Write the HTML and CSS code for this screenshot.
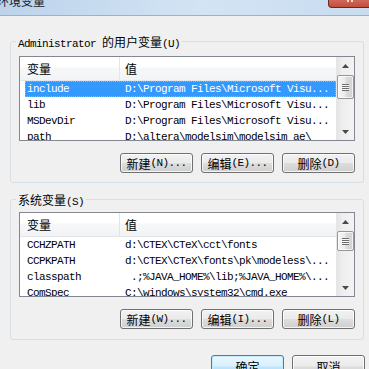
FILE: index.html
```html
<!DOCTYPE html>
<html lang="zh-CN">
<head>
<meta charset="utf-8">
<title>环境变量</title>
<link rel="stylesheet" href="styles.css">
</head>
<body>
<div class="titlebar">
  <span class="title">环境变量</span>
  <span class="close"><span class="leg"></span><span class="leg"></span></span>
</div>

<fieldset class="group group-user">
  <legend><span>Administrator </span><span class="cjk">的用户变量</span><span>(U)</span></legend>
  <div class="list">
    <div class="list-main">
      <div class="header">
        <div class="hcol c1"><span class="cjk">变量</span></div>
        <div class="hcol c2"><span class="cjk">值</span></div>
      </div>
      <div class="row sel"><span class="c1">include</span><span class="c2">D:\Program Files\Microsoft Visu...</span></div>
      <div class="row"><span class="c1">lib</span><span class="c2">D:\Program Files\Microsoft Visu...</span></div>
      <div class="row"><span class="c1">MSDevDir</span><span class="c2">D:\Program Files\Microsoft Visu...</span></div>
      <div class="row"><span class="c1">path</span><span class="c2">D:\altera\modelsim\modelsim_ae\</span></div>
    </div>
    <div class="vscroll">
      <div class="sb-btn"><svg width="7" height="4" viewBox="0 0 7 4"><polygon points="0,4 3.5,0 7,4" fill="#4a4a4a"/></svg></div>
      <div class="track"><div class="thumb thumb-user"><div class="grip"></div></div></div>
      <div class="sb-btn"><svg width="7" height="4" viewBox="0 0 7 4"><polygon points="0,0 7,0 3.5,4" fill="#4a4a4a"/></svg></div>
    </div>
  </div>
  <div class="btnrow">
    <button class="btn"><span class="cjk">新建</span>(N)...</button>
    <button class="btn"><span class="cjk">编辑</span>(E)...</button>
    <button class="btn"><span class="cjk">删除</span>(D)</button>
  </div>
</fieldset>

<fieldset class="group group-sys">
  <legend><span class="cjk">系统变量</span><span>(S)</span></legend>
  <div class="list">
    <div class="list-main">
      <div class="header">
        <div class="hcol c1"><span class="cjk">变量</span></div>
        <div class="hcol c2"><span class="cjk">值</span></div>
      </div>
      <div class="row"><span class="c1">CCHZPATH</span><span class="c2">d:\CTEX\CTeX\cct\fonts</span></div>
      <div class="row"><span class="c1">CCPKPATH</span><span class="c2">d:\CTEX\CTeX\fonts\pk\modeless\...</span></div>
      <div class="row"><span class="c1">classpath</span><span class="c2">&nbsp;.;%JAVA_HOME%\lib;%JAVA_HOME%\...</span></div>
      <div class="row"><span class="c1">ComSpec</span><span class="c2">C:\windows\system32\cmd.exe</span></div>
    </div>
    <div class="vscroll">
      <div class="sb-btn"><svg width="7" height="4" viewBox="0 0 7 4"><polygon points="0,4 3.5,0 7,4" fill="#4a4a4a"/></svg></div>
      <div class="track"><div class="thumb thumb-sys"><div class="grip"></div></div></div>
      <div class="sb-btn"><svg width="7" height="4" viewBox="0 0 7 4"><polygon points="0,0 7,0 3.5,4" fill="#4a4a4a"/></svg></div>
    </div>
  </div>
  <div class="btnrow">
    <button class="btn"><span class="cjk">新建</span>(W)...</button>
    <button class="btn"><span class="cjk">编辑</span>(I)...</button>
    <button class="btn"><span class="cjk">删除</span>(L)</button>
  </div>
</fieldset>

<div class="footer">
  <button class="btn btn-default"><span class="cjk">确定</span></button>
  <button class="btn"><span class="cjk">取消</span></button>
</div>
</body>
</html>
```

FILE: styles.css
```css
html, body {
  margin: 0;
  padding: 0;
  overflow: hidden;
}

body {
  width: 369px;
  height: 369px;
  background: #f0f0f0;
  font-family: "Liberation Mono", "Noto Sans CJK SC", monospace;
  font-size: 11px;
  letter-spacing: -0.6px;
  color: #000;
}

.cjk {
  font-family: "Noto Sans CJK SC", sans-serif;
  font-size: 12px;
  letter-spacing: 0;
}

/* title bar */
.titlebar {
  height: 15px;
  border-bottom: 1px solid #9cb2c7;
  background: linear-gradient(to right, #bcd3eb, #d3e4f4 55%, #c8dcf0);
  display: flex;
  justify-content: space-between;
  align-items: flex-start;
  overflow: hidden;
}

.title {
  font-family: "Noto Sans CJK SC", sans-serif;
  font-size: 12px;
  letter-spacing: 0;
  line-height: 12px;
  margin: -5px 0 0 -3px;
  color: #1a1a1a;
}

.close {
  width: 38px;
  height: 7px;
  border-left: 1px solid #6b2620;
  border-bottom: 1px solid #6b2620;
  border-radius: 0 0 0 4px;
  background: linear-gradient(#cf6a5a, #c44c3b);
  display: flex;
  justify-content: center;
  gap: 2px;
  padding-left: 2px;
}

.close .leg {
  width: 2px;
  height: 2px;
  background: #f3dcd8;
}

/* group boxes */
.group {
  box-sizing: border-box;
  width: 354px;
  min-width: 0;
  margin: 19px 0 0 10px;
  padding: 8px 8px 9px 8px;
  border: 1px solid #d5dfe5;
  border-radius: 3px;
}

.group legend {
  display: block;
  height: 13px;
  line-height: 13px;
  margin-left: -3px;
  padding: 0 2px;
  white-space: nowrap;
}

.group-sys {
  margin-top: 10px;
  padding-top: 6px;
  padding-bottom: 10px;
}

/* list view */
.list {
  box-sizing: border-box;
  height: 85px;
  display: flex;
  border: 1px solid #828790;
  background: #fff;
}

.list-main {
  flex: 1;
  min-width: 0;
  overflow: hidden;
}

.header {
  display: flex;
  height: 23px;
  border-bottom: 1px solid #e3e6ea;
  background: linear-gradient(#ffffff 0%, #ffffff 45%, #f7f8f9 46%, #f2f3f5 100%);
}

.hcol {
  display: flex;
  align-items: center;
}

.hcol.c1 {
  width: 92px;
  padding-left: 7px;
  border-right: 1px solid #e5e5e5;
}

.hcol.c2 {
  padding-left: 5px;
}

.row {
  display: flex;
  box-sizing: border-box;
  height: 16px;
  line-height: 16px;
  margin-left: 5px;
  white-space: nowrap;
}

.row .c1 {
  flex: none;
  width: 98px;
  padding-left: 2px;
}

.row.sel {
  background: #3399ff;
  color: #fff;
  border: 1px dotted #f2a33a;
  line-height: 14px;
}

.row.sel .c1 {
  padding-left: 1px;
}

/* scrollbar */
.vscroll {
  flex: none;
  width: 17px;
  border-left: 1px solid #e6e6e6;
  display: flex;
  flex-direction: column;
  background: linear-gradient(to right, #e4e4e4, #eeeeee 30%, #f3f3f3);
}

.sb-btn {
  height: 17px;
  flex: none;
  display: flex;
  align-items: center;
  justify-content: center;
}

.track {
  flex: 1;
}

.thumb {
  box-sizing: border-box;
  margin-top: 1px;
  border: 1px solid #979797;
  border-radius: 2px;
  background: linear-gradient(to right, #f5f5f5, #ececec 45%, #dcdcdc 55%, #d2d2d2);
  box-shadow: inset 0 0 0 1px rgba(255, 255, 255, 0.7);
  display: flex;
  align-items: center;
  justify-content: center;
}

.thumb-user {
  height: 24px;
}

.thumb-sys {
  height: 20px;
}

.grip {
  width: 7px;
  height: 7px;
  background: repeating-linear-gradient(#6f6f6f 0 1px, #f6f6f6 1px 2px);
}

/* buttons */
.btnrow {
  display: flex;
  justify-content: flex-end;
  gap: 8px;
  margin-top: 12px;
}

.btn {
  box-sizing: border-box;
  width: 73px;
  height: 20px;
  padding: 0;
  border: 1px solid #707070;
  border-radius: 3px;
  background: linear-gradient(#f2f2f2 0%, #ebebeb 48%, #dddddd 52%, #cfcfcf 100%);
  box-shadow: inset 0 0 0 1px rgba(255, 255, 255, 0.75);
  font: inherit;
  letter-spacing: inherit;
  color: #000;
  display: flex;
  align-items: center;
  justify-content: center;
  white-space: nowrap;
}

.footer {
  display: flex;
  justify-content: flex-end;
  gap: 8px;
  margin-top: 15px;
  padding-right: 4px;
}

.footer .btn {
  height: 23px;
}

.btn-default {
  border-color: #3c7fb1;
  background: linear-gradient(#eaf6fd 0%, #d9f0fc 48%, #bee6fd 52%, #a7d9f5 100%);
  box-shadow: inset 0 0 0 1px #c6e9fc;
}
```
